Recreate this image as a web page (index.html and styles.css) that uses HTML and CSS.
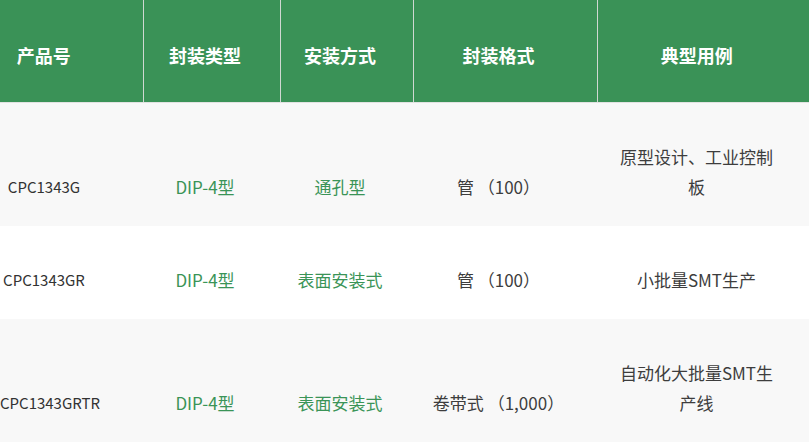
FILE: index.html
```html
<!DOCTYPE html>
<html lang="zh-CN">
<head>
<meta charset="utf-8">
<title>封装类型</title>
<link rel="stylesheet" href="styles.css">
</head>
<body>
<table class="spec">
  <colgroup>
    <col class="c1"><col class="c2"><col class="c3"><col class="c4"><col class="c5">
  </colgroup>
  <thead>
    <tr>
      <th class="first">产品号</th>
      <th>封装类型</th>
      <th>安装方式</th>
      <th>封装格式</th>
      <th class="last">典型用例</th>
    </tr>
  </thead>
  <tbody>
    <tr class="odd">
      <td class="first">CPC1343G</td>
      <td class="green">DIP-4型</td>
      <td class="green">通孔型</td>
      <td>管 （100）</td>
      <td class="last">原型设计、工业控制板</td>
    </tr>
    <tr class="even">
      <td class="first">CPC1343GR</td>
      <td class="green">DIP-4型</td>
      <td class="green">表面安装式</td>
      <td>管 （100）</td>
      <td class="last">小批量SMT生产</td>
    </tr>
    <tr class="odd">
      <td class="first">CPC1343GRTR</td>
      <td class="green">DIP-4型</td>
      <td class="green">表面安装式</td>
      <td>卷带式 （1,000）</td>
      <td class="last">自动化大批量SMT生产线</td>
    </tr>
  </tbody>
</table>
</body>
</html>
```
FILE: styles.css
```css
html, body {
  margin: 0;
  padding: 0;
  background: #ffffff;
}
body {
  font-family: "Noto Sans CJK SC", "Open Sans", sans-serif;
  overflow: hidden;
}
.spec {
  border-collapse: collapse;
  table-layout: fixed;
  width: 809px;
}
.c1 { width: 143px; }
.c2 { width: 137px; }
.c3 { width: 133px; }
.c4 { width: 184px; }
.c5 { width: 212px; }

.spec th {
  background: #3a9257;
  color: #ffffff;
  font-size: 18px;
  font-weight: bold;
  line-height: 30px;
  padding: 40px 19px 32px 6px;
  text-align: center;
  border-left: 1px solid #cfd8d2;
  border-bottom: 1px solid #e2e2e2;
}
.spec th.first {
  border-left: none;
  padding: 40px 55px 32px 0;
}
.spec th.last {
  padding: 40px 31px 32px 18px;
}
.spec td {
  font-size: 17px;
  line-height: 30px;
  color: #3d3d3d;
  text-align: center;
  vertical-align: bottom;
  padding: 39px 19px 24px 6px;
}
.spec td.first {
  font-size: 15px;
  padding: 39px 55px 24px 0;
  color: #333333;
}
.spec td.last {
  padding: 39px 31px 24px 18px;
}
.spec td.green {
  color: #3a9457;
}
.odd { background: #f8f8f8; }
.even { background: #ffffff; }
```
